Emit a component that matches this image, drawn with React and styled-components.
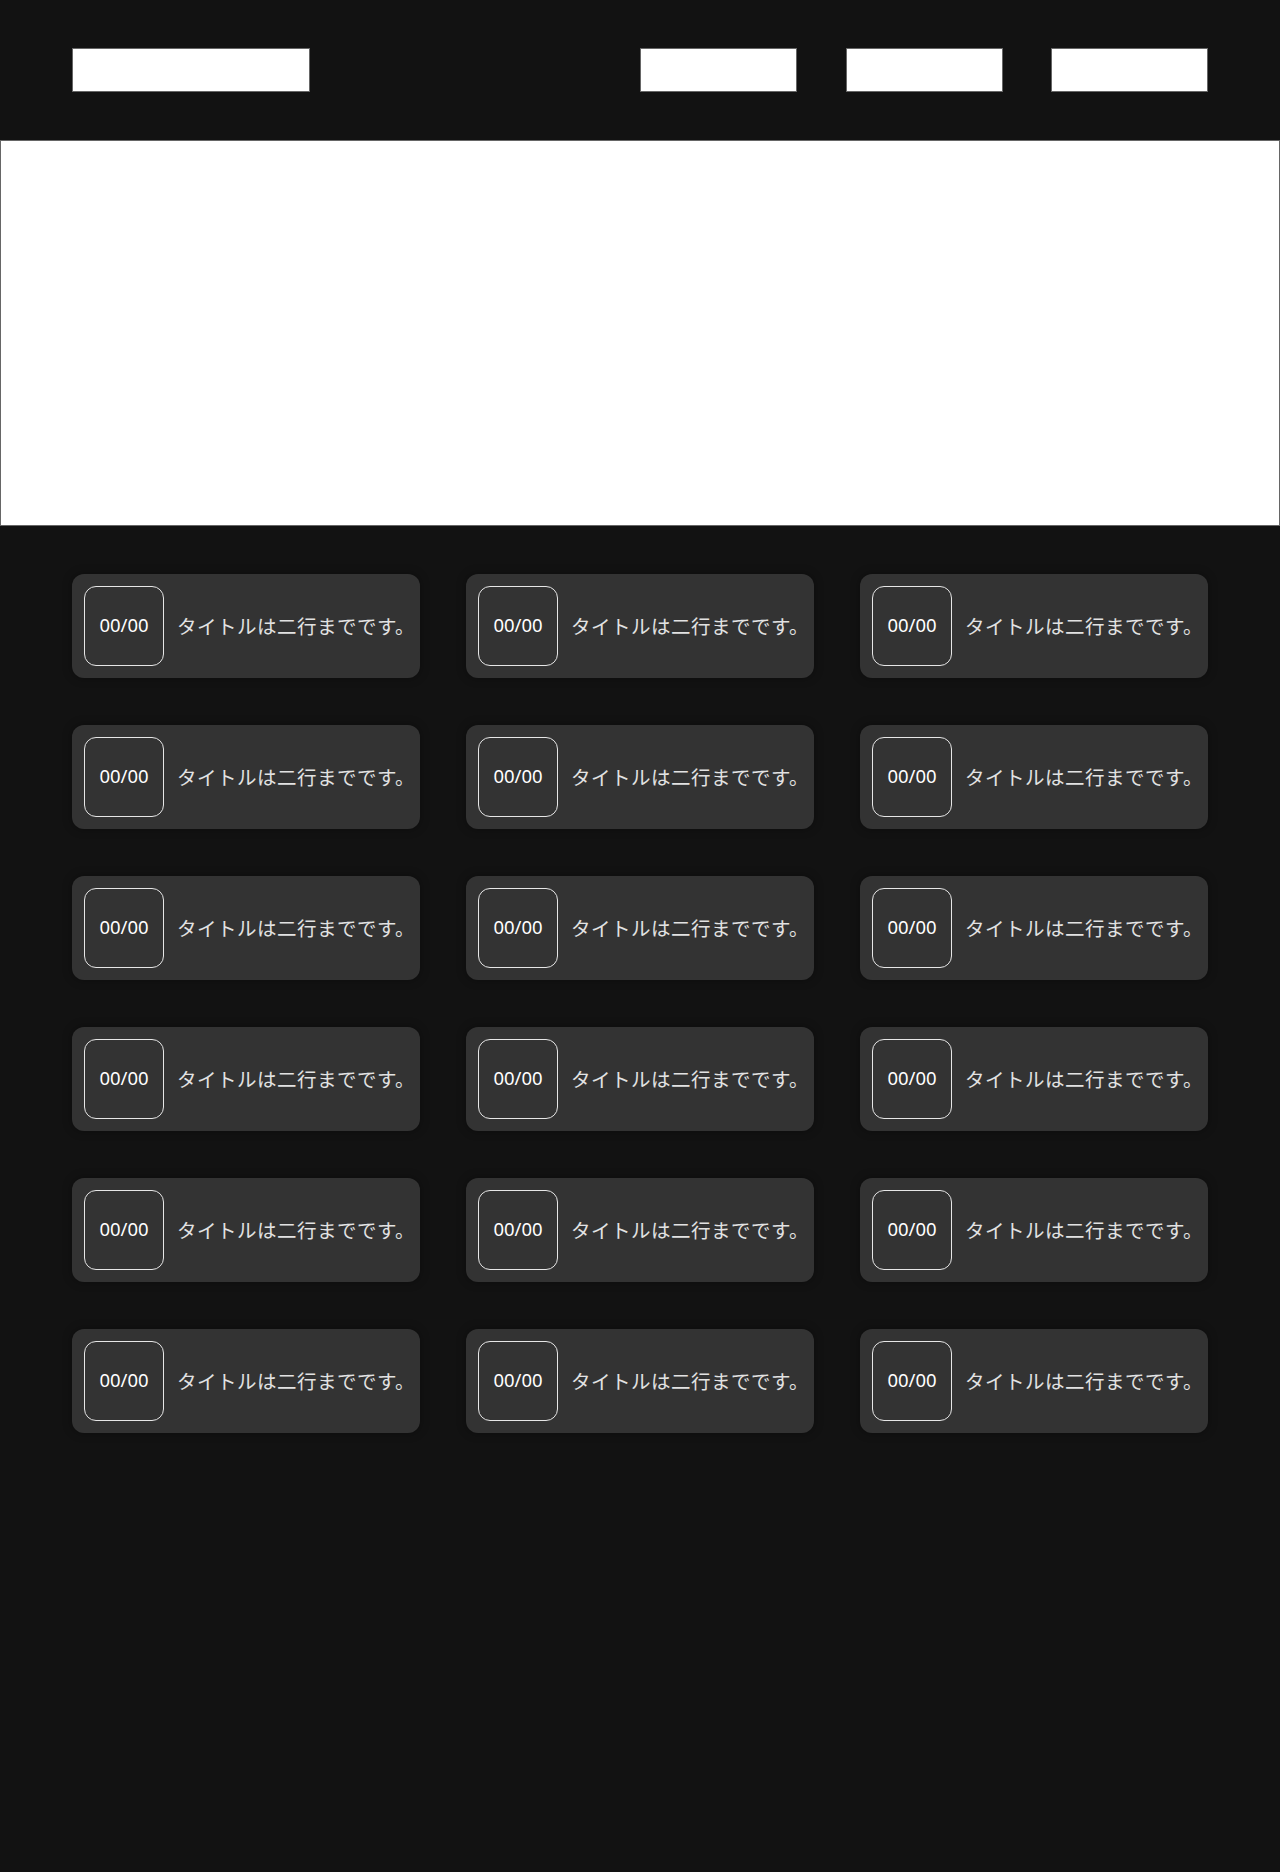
import React from 'react'
import styled, { createGlobalStyle } from 'styled-components'

const GlobalStyle = createGlobalStyle`
  html, body {
    margin: 0;
    padding: 0;
    background: #121212;
  }
  body {
    font-family: "Noto Sans", "Noto Sans CJK JP", sans-serif;
    color: #fff;
  }
  * {
    box-sizing: border-box;
  }
`

const Page = styled.div`
  min-height: 1872px;
  background: #121212;
`

const Header = styled.header`
  height: 140px;
  padding: 0 72px;
  display: flex;
  align-items: center;
  justify-content: space-between;
`

const Placeholder = styled.div`
  width: ${(p) => p.$w}px;
  height: 44px;
  background: #fff;
  border: 1px solid #666;
`

const Nav = styled.nav`
  display: flex;
  gap: 48.5px;
`

const Hero = styled.section`
  height: 386px;
  background: #fff;
  border: 1px solid #666;
`

const List = styled.ul`
  list-style: none;
  margin: 0;
  padding: 48px 72px 0;
  display: grid;
  grid-template-columns: repeat(3, 1fr);
  column-gap: 46px;
  row-gap: 47px;
`

const Card = styled.li`
  height: 104px;
  padding: 12px 0 12px 12px;
  background: #333;
  border-radius: 12px;
  box-shadow: 0 0 10px rgba(0, 0, 0, 0.35);
  display: flex;
  align-items: center;
  gap: 13px;
`

const DateBox = styled.div`
  flex: none;
  width: 80px;
  height: 80px;
  border: 1px solid #e6e6e6;
  border-radius: 12px;
  display: flex;
  align-items: center;
  justify-content: center;
  font-size: 18.5px;
  color: #fff;
  padding-bottom: 3px;
`

const Title = styled.p`
  flex: 1;
  min-width: 0;
  margin: 0;
  font-family: "Noto Sans CJK JP", sans-serif;
  font-size: 19.5px;
  letter-spacing: 0.5px;
  line-height: 1.5;
  color: #e2e2e2;
  display: -webkit-box;
  -webkit-line-clamp: 2;
  -webkit-box-orient: vertical;
  overflow: hidden;
`

const items = Array.from({ length: 18 }, (_, i) => ({
  id: i,
  date: '00/00',
  title: 'タイトルは二行までです。',
}))

const App = () => {
  return (
    <Page>
      <GlobalStyle />
      <Header>
        <Placeholder $w={238} />
        <Nav>
          <Placeholder $w={157} />
          <Placeholder $w={157} />
          <Placeholder $w={157} />
        </Nav>
      </Header>
      <Hero />
      <List>
        {items.map((item) => (
          <Card key={item.id}>
            <DateBox>{item.date}</DateBox>
            <Title>{item.title}</Title>
          </Card>
        ))}
      </List>
    </Page>
  )
}

export default App
